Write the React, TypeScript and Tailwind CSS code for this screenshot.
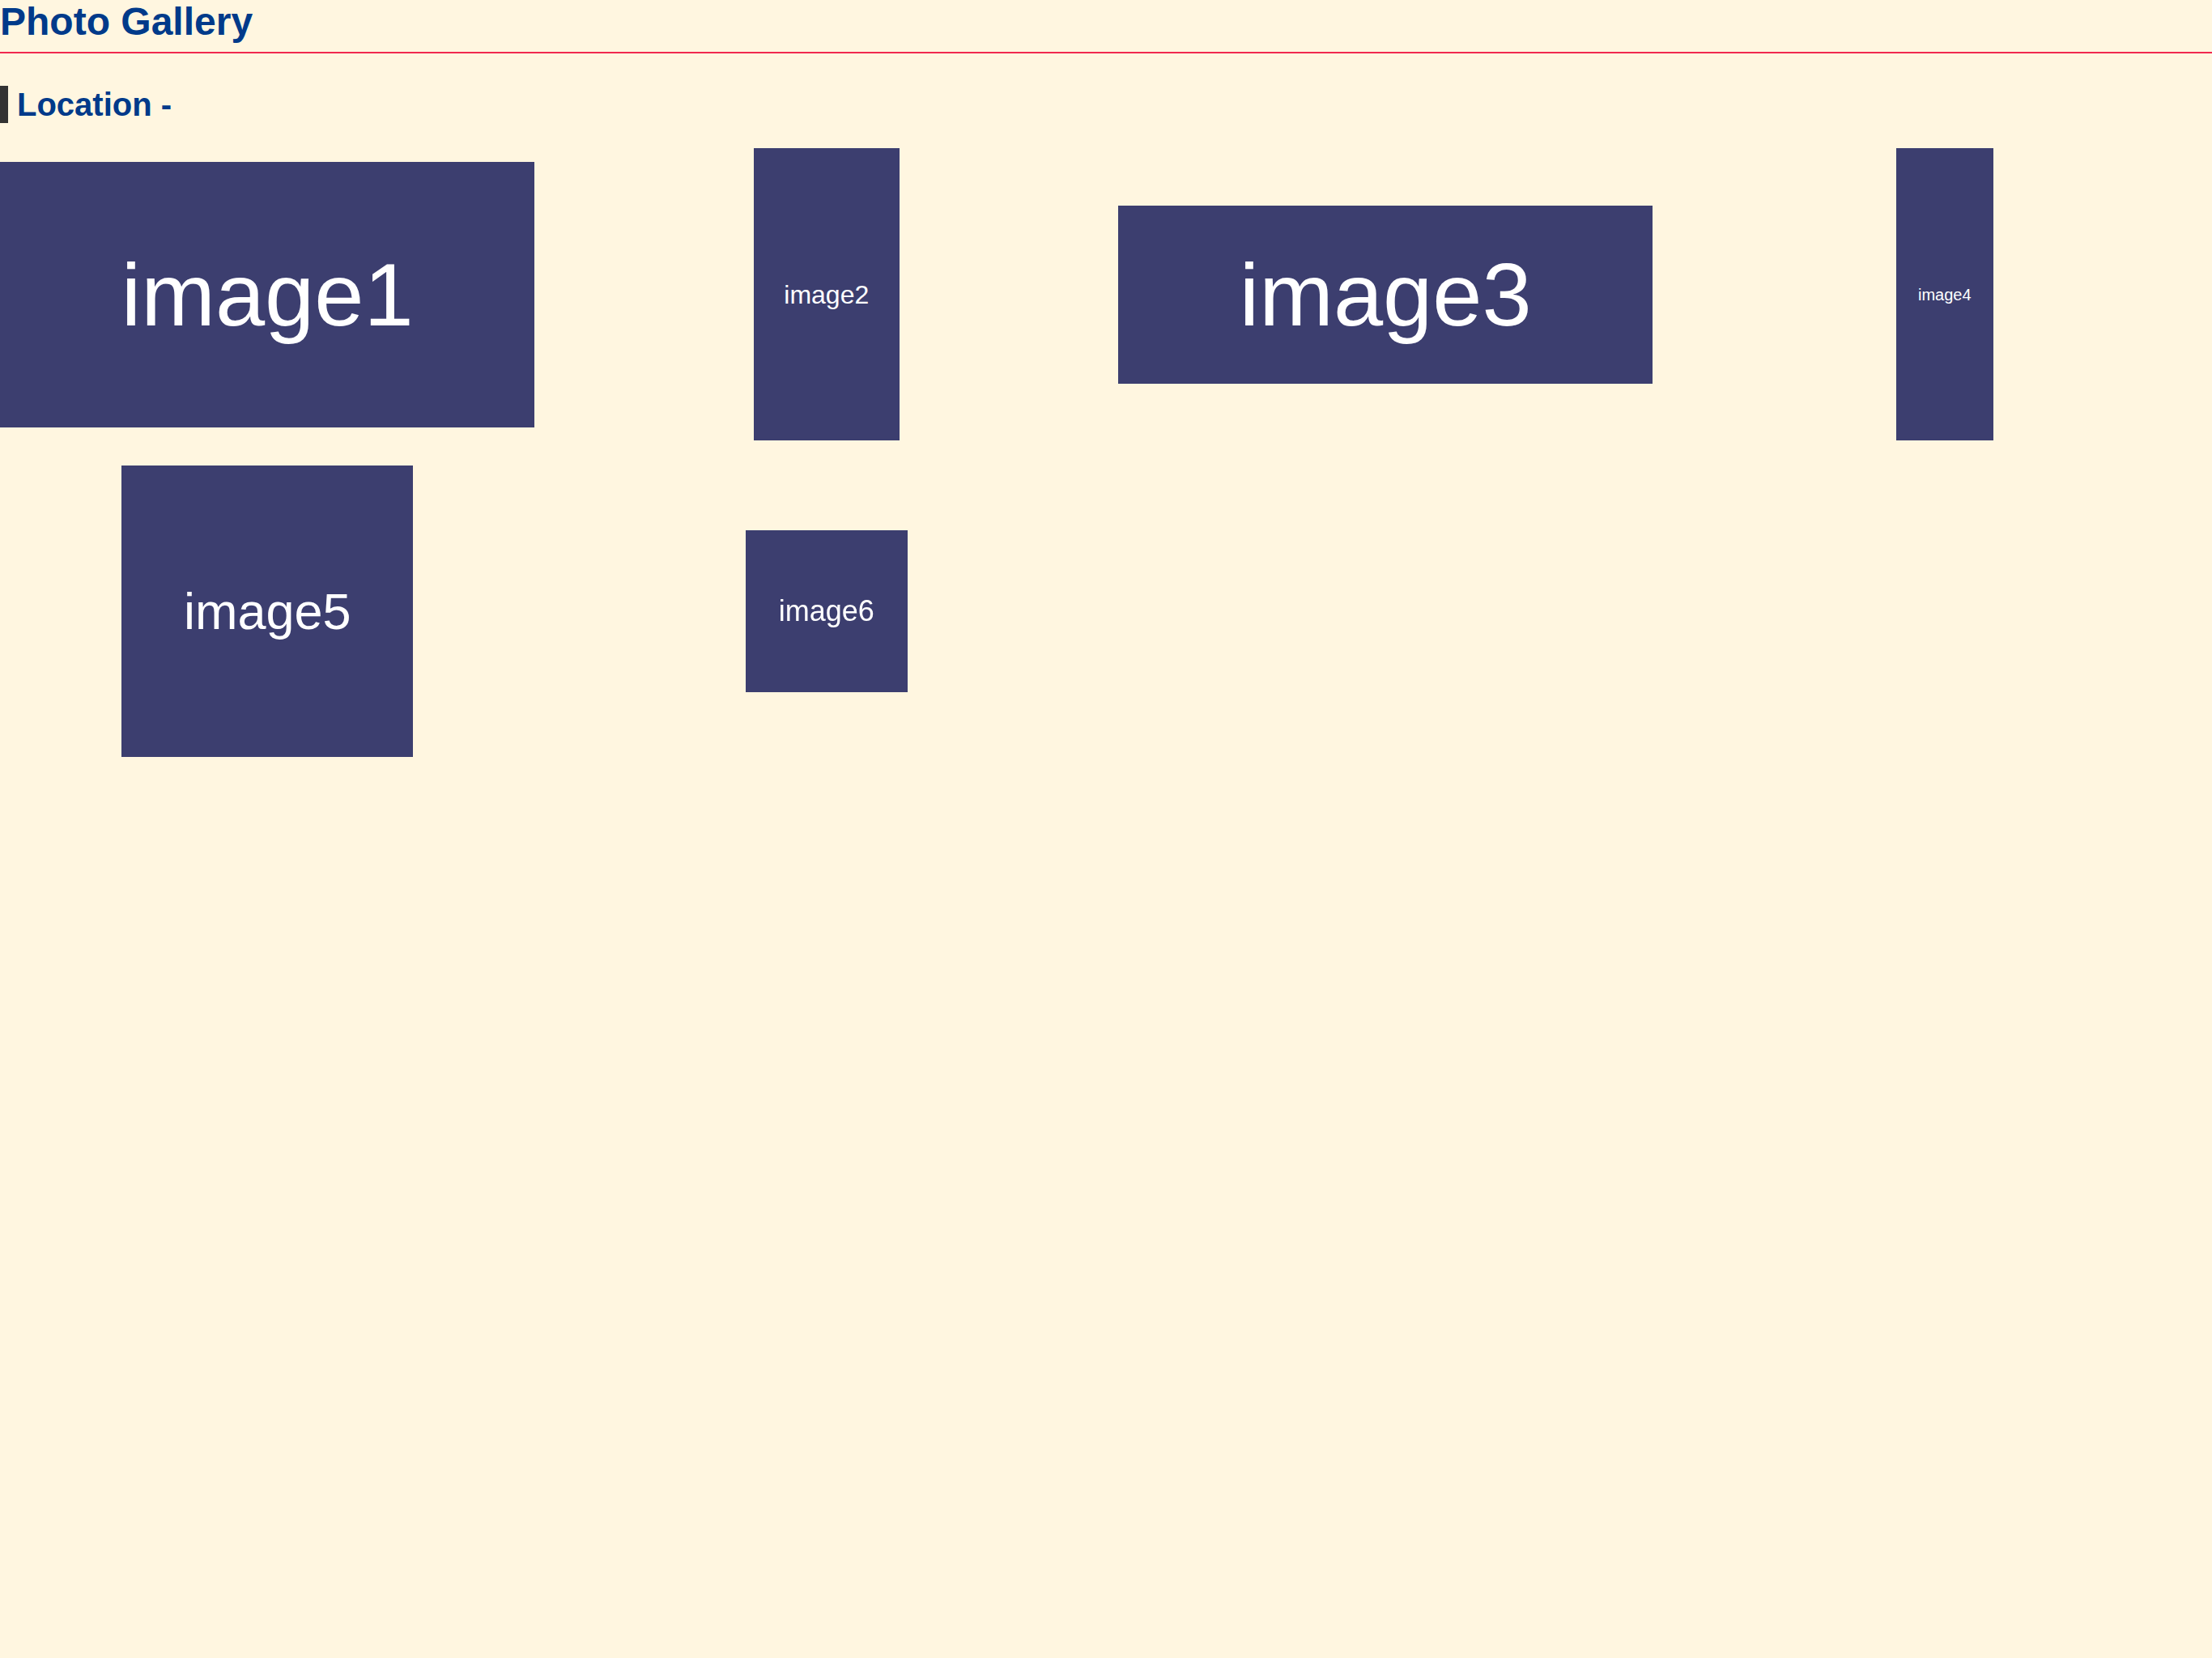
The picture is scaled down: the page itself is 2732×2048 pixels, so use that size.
import React from "react";

type Img = { label: string; w: string; h: string; text: string; extra?: string };

const images: Img[] = [
  { label: "image1", w: "w-[660px]", h: "h-[328px]", text: "text-[110px]" },
  { label: "image2", w: "w-[180px]", h: "h-[361px]", text: "text-[32px]" },
  { label: "image3", w: "w-[660px]", h: "h-[220px]", text: "text-[110px]" },
  { label: "image4", w: "w-[120px]", h: "h-[361px]", text: "text-[20px]", extra: "text-[#eeeef4]" },
  { label: "image5", w: "w-[360px]", h: "h-[360px]", text: "text-[63px]" },
  { label: "image6", w: "w-[200px]", h: "h-[200px]", text: "text-[36px]", extra: "text-[#e8e8f0] blur-[0.6px]" },
];

export default function App() {
  return (
    <div className="min-h-screen w-full bg-[#fff6e0] font-['Liberation_Sans',Arial,sans-serif]">
      <h1 className="m-0 border-b-2 border-[#f0284f] pb-[10px] text-[48px] font-bold leading-[54px] text-[#003a8a]">
        Photo Gallery
      </h1>
      <div className="mt-[40px] flex h-[46px] items-center border-l-[10px] border-[#333333] pl-[11px] text-[40px] font-bold leading-[46px] text-[#003a8a]">
        Location -
      </div>
      <div className="mt-[31px] grid grid-cols-4 items-center justify-items-center gap-x-[30px] gap-y-[31px]">
        {images.map((img) => (
          <div
            key={img.label}
            className={`flex items-center justify-center bg-[#3c3e6f] ${img.w} ${img.h}`}
          >
            <span className={`leading-none text-white ${img.text} ${img.extra ?? ""}`}>
              {img.label}
            </span>
          </div>
        ))}
      </div>
    </div>
  );
}
